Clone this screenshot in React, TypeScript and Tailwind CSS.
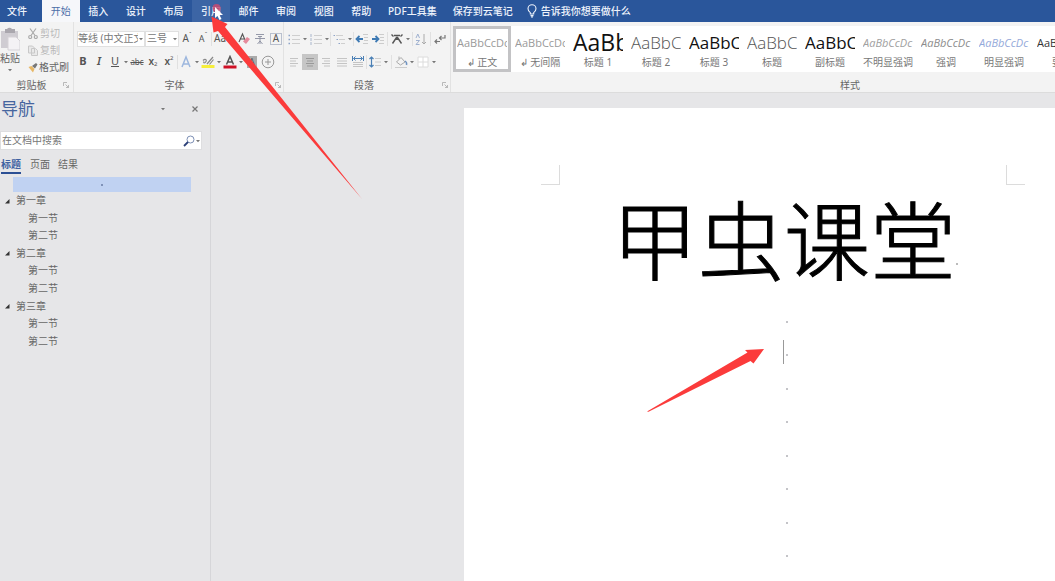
import type { ReactNode } from "react";

const tabs = ["开始", "插入", "设计", "布局", "引用", "邮件", "审阅", "视图", "帮助"];

const styles = [
  { name: "↲ 正文", sample: "AaBbCcDc", look: "text-[11px] text-[#9a9a9a]" },
  { name: "↲ 无间隔", sample: "AaBbCcDc", look: "text-[11px] text-[#9a9a9a]" },
  { name: "标题 1", sample: "AaBb", look: "text-[23px] font-medium text-[#111]" },
  { name: "标题 2", sample: "AaBbC", look: "text-[17px] font-light text-[#555]" },
  { name: "标题 3", sample: "AaBbC", look: "text-[17px] font-medium text-[#111]" },
  { name: "标题", sample: "AaBbC", look: "text-[17px] font-light text-[#555]" },
  { name: "副标题", sample: "AaBbC", look: "text-[17px] font-medium text-[#111]" },
  { name: "不明显强调", sample: "AaBbCcDc", look: "text-[11px] italic text-[#a0a0a0]" },
  { name: "强调", sample: "AaBbCcDc", look: "text-[11px] italic text-[#8c8c8c]" },
  { name: "明显强调", sample: "AaBbCcDc", look: "text-[11px] italic text-[#94a9da]" },
  { name: "要点", sample: "AaBbCcDc", look: "text-[11px] font-medium text-[#333]" },
];

const outline = [
  { title: "第一章", sections: ["第一节", "第二节"] },
  { title: "第二章", sections: ["第一节", "第二节"] },
  { title: "第三章", sections: ["第一节", "第二节"] },
];

function Tool({ label, on, children }: { label: string; on?: boolean; children: ReactNode }) {
  return (
    <button
      aria-label={label}
      className={
        "flex h-4 w-4 shrink-0 items-center justify-center text-[#555] " + (on ? "bg-[#c6c6c6]" : "")
      }
    >
      {children}
    </button>
  );
}

function Caret() {
  return (
    <svg viewBox="0 0 6 6" className="h-1.5 w-1.5 shrink-0" fill="#777">
      <path d="M1 2h4L3 4.200z" />
    </svg>
  );
}

function Rule() {
  return <span className="h-3.5 w-px shrink-0 bg-[#e0e0e0]" />;
}

function Icon({ children }: { children: ReactNode }) {
  return (
    <svg viewBox="0 0 14 14" className="h-3.5 w-3.5" fill="none" stroke="currentColor">
      {children}
    </svg>
  );
}

function Launcher() {
  return (
    <svg viewBox="0 0 6 6" className="h-1.5 w-1.5" fill="none" stroke="#aaa" strokeWidth="0.8">
      <path d="M0.5 4V0.5H4M2.5 2.5l3 3M5.5 3v2.5H3" />
    </svg>
  );
}

function GroupLabel({ text, launcher }: { text: string; launcher?: boolean }) {
  return (
    <div className="mt-auto flex h-3.5 items-center text-[10px] text-[#666]">
      <span className="flex-1 whitespace-nowrap text-center leading-3.5">{text}</span>
      {launcher && <Launcher />}
    </div>
  );
}

function TitleTabs() {
  return (
    <nav className="flex h-[22px] items-stretch overflow-hidden whitespace-nowrap bg-[#2a569b] text-[10px] font-medium text-[#eef3fb]">
      <button className="w-[42px] pr-2 text-center">文件</button>
      <div className="grid w-[338px] shrink-0 grid-cols-9">
        {tabs.map((tab) => (
          <button
            key={tab}
            className={
              tab === "开始" ? "bg-[#f6f7fa] font-normal text-[#4b6ea8]" : tab === "引用" ? "bg-[#3c65a5]" : ""
            }
          >
            {tab}
          </button>
        ))}
      </div>
      <button className="px-2">PDF工具集</button>
      <button className="px-2">保存到云笔记</button>
      <button className="flex items-center gap-1 pl-1.5">
        <svg viewBox="0 0 10 14" className="h-3.5 w-2.5" fill="none" stroke="#eef3fb" strokeWidth="1.1">
          <path d="M3.3 10V8.6C2 7.6 1 6.500 1 4.800a4 4 0 0 1 8 0c0 1.700-1 2.800-2.300 3.800V10zM3.500 11.600h3M4 13h2" />
        </svg>
        告诉我你想要做什么
      </button>
    </nav>
  );
}

function Clipboard() {
  return (
    <section className="flex w-[74px] shrink-0 flex-col border-r border-[#e2e2e2] pr-1">
      <div className="flex gap-2 whitespace-nowrap pt-[3px]">
        <button className="flex w-5 flex-col items-center pt-0.5 text-[10px] text-[#666]">
          <svg viewBox="0 0 20 24" className="h-6 w-5">
            <path d="M1 4h17v17H1z" fill="#cfccd2" />
            <path d="M5 2h2a3 3 0 0 1 5 0h3v4H5z" fill="#aaa7ae" />
            <path d="M8 10h8l4 4v9H8z" fill="#f4f2f5" stroke="#d5d2d7" />
          </svg>
          <span className="leading-3.5">粘贴</span>
          <span className="mt-0.5"><Caret /></span>
        </button>
        <div className="flex flex-col text-[10px] text-[#b9b9b9]">
          <button className="flex h-[17px] items-center gap-0.5">
            <svg viewBox="0 0 10 11" className="h-[11px] w-2.5" fill="none" stroke="#aaa" strokeWidth="1.2">
              <path d="M2 0.500l5 7M8 0.500l-5 7" />
              <circle cx="2.200" cy="9" r="1.500" />
              <circle cx="7.800" cy="9" r="1.500" />
            </svg>
            剪切
          </button>
          <button className="flex h-[17px] items-center gap-0.5">
            <svg viewBox="0 0 10 11" className="h-[11px] w-2.5" fill="#e9e9e9" stroke="#c8c8c8">
              <path d="M0.500 1h4l2 2v5h-6zM3.500 3.500h4l2 2v5h-6z" />
            </svg>
            复制
          </button>
          <button className="flex h-[17px] items-center gap-px text-[#666]">
            <svg viewBox="0 0 10 11" className="h-[11px] w-2.5 shrink-0">
              <path d="M0.500 5l3-1 3 3-1.500 3.500z" fill="#e7b765" />
              <path d="M4 4l4-3 1.500 1.500L7 6.500z" fill="#777" />
            </svg>
            格式刷
          </button>
        </div>
      </div>
      <GroupLabel text="剪贴板" launcher />
    </section>
  );
}

function FontGroup() {
  return (
    <section className="flex w-[210px] shrink-0 flex-col border-r border-[#e2e2e2] pr-0.5 pt-[5px]">
      <div className="flex h-[23px] items-center pl-[3px]">
        <div className="relative flex h-4 w-[68px] shrink-0 items-center border border-[#e0e0e0] bg-white">
          <select aria-label="字体" className="w-full appearance-none overflow-hidden bg-transparent pr-1.5 text-[10px] text-[#777]">
            <option>等线 (中文正文)</option>
          </select>
          <span className="pointer-events-none absolute right-0 top-0 flex h-full items-center bg-white"><Caret /></span>
        </div>
        <div className="relative flex h-4 w-[34px] shrink-0 items-center border border-[#e0e0e0] bg-white">
          <select aria-label="字号" className="w-full appearance-none bg-transparent pl-px text-[10px] text-[#777]">
            <option>三号</option>
          </select>
          <span className="pointer-events-none absolute right-0 top-0 flex h-full items-center"><Caret /></span>
        </div>
        <Tool label="增大字号"><span className="text-[10px]">A</span><span className="mb-2 text-[6px]">ˆ</span></Tool>
        <Tool label="减小字号"><span className="text-[9px]">A</span><span className="mb-2 text-[6px]">ˇ</span></Tool>
        <Rule />
        <Tool label="更改大小写"><span className="text-[10px]">Aa</span></Tool>
        <span className="w-2 shrink-0"><Caret /></span>
        <Tool label="清除所有格式">
          <Icon>
            <path d="M2 10L5.500 2 8 8M3.500 7h4" strokeWidth="1.100" />
            <path d="M6 9.500l4-4.500 3 2-4 5z" fill="#e58b9c" stroke="none" />
          </Icon>
        </Tool>
        <Tool label="拼音指南">
          <Icon><path d="M3 2.500h8M5 4.500h4M2 6.500h10M7 4.500V12M4.500 12l2.500-3 2.500 3" stroke="#8a8fa0" strokeWidth="0.900" /></Icon>
        </Tool>
        <Tool label="字符边框"><span className="flex h-3 w-3 items-center justify-center border border-[#b9c0ce] text-[10px]">A</span></Tool>
      </div>
      <div className="flex h-[23px] items-center pl-px">
        <Tool label="加粗"><span className="text-[11px] font-bold">B</span></Tool>
        <Tool label="倾斜"><span className="text-[11px] font-semibold italic">I</span></Tool>
        <Tool label="下划线"><span className="text-[11px] underline">U</span></Tool>
        <Caret />
        <Tool label="删除线"><span className="text-[8px] line-through">abc</span></Tool>
        <Tool label="下标"><span className="text-[10px] font-semibold">x</span><span className="mt-1.5 text-[6px]">2</span></Tool>
        <Tool label="上标"><span className="text-[10px] font-semibold">x</span><span className="mb-1.5 text-[6px]">2</span></Tool>
        <Rule />
        <Tool label="文本效果">
          <Icon><path d="M3 12L7 2l4 10M4.500 9h5" stroke="#9db7de" strokeWidth="1.500" /></Icon>
        </Tool>
        <Caret />
        <Tool label="突出显示">
          <Icon>
            <path d="M0.500 10h13v3h-13z" fill="#f6ee3a" stroke="none" />
            <path d="M2 5.500c2-2 4-1 3 1s-3 2-2 0M6 9l6-7M8.500 9.500l4-5" strokeWidth="1.200" stroke="#888" />
          </Icon>
        </Tool>
        <Caret />
        <Tool label="字体颜色">
          <Icon>
            <path d="M0.500 10.500h13V13.500h-13z" fill="#cf1126" stroke="none" />
            <path d="M3.500 9.500L7 1.500l3.500 8M5 7h4" strokeWidth="1.500" />
          </Icon>
        </Tool>
        <Caret />
        <Tool label="字符底纹"><span className="flex h-3 w-2.5 items-center justify-center bg-[#aaa] text-[9px]">A</span></Tool>
        <Tool label="带圈字符">
          <Icon><circle cx="7" cy="7" r="5.800" stroke="#999" /><path d="M4 7h6M7 4v6" stroke="#999" /></Icon>
        </Tool>
      </div>
      <GroupLabel text="字体" launcher />
    </section>
  );
}

function Lines({ d }: { d: string }) {
  return <Icon><path d={d} stroke="#c4c4c4" /></Icon>;
}

function ParagraphGroup() {
  return (
    <section className="flex w-[167px] shrink-0 flex-col border-r border-[#e2e2e2] pl-0.5 pr-0.5 pt-[5px]">
      <div className="flex h-[23px] items-center">
        <Tool label="项目符号">
          <Icon>
            <path d="M5 3.500h8M5 7.500h8M5 11.500h8" stroke="#cfcfcf" />
            <path d="M1.500 3.500h1.500M1.500 7.500h1.500M1.500 11.500h1.500" stroke="#8ea4c8" strokeWidth="1.500" />
          </Icon>
        </Tool>
        <Caret />
        <Tool label="编号">
          <Icon>
            <path d="M5 3.500h8M5 7.500h8M5 11.500h8" stroke="#cfcfcf" />
            <path d="M2 2v3M2 6v3M2 10v3" stroke="#a9b6cc" />
          </Icon>
        </Tool>
        <Caret />
        <Rule />
        <Tool label="多级列表">
          <Icon>
            <path d="M4 3.500h7M7 7.500h6M9 11.500h4" stroke="#cfcfcf" />
            <path d="M1.500 3.500h1.500M4.500 7.500h1.500M6.500 11.500h1.500" stroke="#8ea4c8" />
          </Icon>
        </Tool>
        <Caret />
        <Rule />
        <Tool label="减少缩进">
          <Icon>
            <path d="M8 2.500h5M9 5.500h4M9 8.500h4M8 11.500h5" stroke="#ccc" />
            <path d="M8 7H2M4.500 4L1.500 7l3 3" stroke="#3e7ab4" strokeWidth="1.800" />
          </Icon>
        </Tool>
        <Tool label="增加缩进">
          <Icon>
            <path d="M8 2.500h5M9 5.500h4M9 8.500h4M8 11.500h5" stroke="#ccc" />
            <path d="M1 7h6M4.500 4l3 3-3 3" stroke="#3e7ab4" strokeWidth="1.800" />
          </Icon>
        </Tool>
        <span className="flex w-1 justify-center"><Rule /></span>
        <Tool label="中文版式">
          <Icon><path d="M1.500 2.500l2 2M12.500 2.500l-2 2M2.500 11.500l4-6h1l4 6M4 3.500h6M7 6v2" strokeWidth="1.400" /></Icon>
        </Tool>
        <Caret />
        <span className="flex w-1 justify-center"><Rule /></span>
        <Tool label="排序">
          <Icon>
            <path d="M2 6l1.800-4L5.500 6M2 8.500h3.500L2 12.500h3.500" stroke="#9fb1d0" />
            <path d="M10 2v10M8 10l2 2 2-2" stroke="#aaa" />
          </Icon>
        </Tool>
        <span className="flex w-1 justify-center"><Rule /></span>
        <Tool label="显示编辑标记">
          <Icon><path d="M12 3v3H7M8.500 4L6.500 6l2 2M7 9.500H2M4 7.500l-2 2 2 2" strokeWidth="1.200" stroke="#777" /></Icon>
        </Tool>
      </div>
      <div className="flex h-[23px] items-center">
        <Tool label="左对齐"><Lines d="M3 3.500h8M3 6h6M3 8.500h8M3 11h6" /></Tool>
        <Tool label="居中" on><Icon><path d="M3 3.500h8M4 6h6M3 8.500h8M4 11h6" stroke="#999" /></Icon></Tool>
        <Tool label="右对齐"><Lines d="M3 3.500h8M5 6h6M3 8.500h8M5 11h6" /></Tool>
        <Tool label="两端对齐"><Lines d="M2 3.500h10M2 6h10M2 8.500h10M2 11h10" /></Tool>
        <Tool label="分散对齐">
          <Icon>
            <path d="M2 7.500h10M2 9.500h10M2 11.500h10" stroke="#c4c4c4" />
            <path d="M1.500 1v5M12.500 1v5M2.500 3.500h9M4.500 1.500l-2 2 2 2M9.500 1.500l2 2-2 2" stroke="#4b80b5" />
          </Icon>
        </Tool>
        <Rule />
        <Tool label="行距">
          <Icon>
            <path d="M7 3.500h6M7 7h6M7 10.500h6" stroke="#ccc" />
            <path d="M3.500 2v10M1.500 4l2-2 2 2M1.500 10l2 2 2-2" stroke="#4b80b5" strokeWidth="1.200" />
          </Icon>
        </Tool>
        <Caret />
        <span className="flex w-1 justify-center"><Rule /></span>
        <Tool label="底纹">
          <Icon>
            <path d="M2.500 7L7 2.500l4 4.500-4.500 3zM5 4V1.500" stroke="#aaa" />
            <path d="M11 6c1.500 1 2 2 1.500 4" stroke="#6f93c2" strokeWidth="1.500" />
            <path d="M1 12.500h12" stroke="#ccc" />
          </Icon>
        </Tool>
        <Caret />
        <Tool label="边框">
          <Icon><path d="M2 2h10v10H2zM7 2v10M2 7h10" stroke="#dcdcdc" fill="#fff" /></Icon>
        </Tool>
        <Caret />
      </div>
      <GroupLabel text="段落" launcher />
    </section>
  );
}

function StyleGallery() {
  return (
    <section className="flex min-w-0 flex-1 flex-col pl-0.5">
      <div className="mt-1 flex h-[46px] overflow-hidden bg-white">
        {styles.map((style, i) => (
          <button
            key={style.name}
            className={
              "flex w-[58px] shrink-0 flex-col items-center border-[3px] " +
              (i === 0 ? "border-[#c3c3c5]" : "border-transparent")
            }
          >
            <span className={"h-[27px] w-[50px] overflow-hidden whitespace-nowrap text-left font-['Open_Sans','Noto_Sans',sans-serif] leading-[27px] " + style.look}>
              {style.sample}
            </span>
            <span className="whitespace-nowrap text-[10px] leading-3 text-[#777]">{style.name}</span>
          </button>
        ))}
      </div>
      <div className="mr-48 mt-auto flex h-3.5 items-center justify-center pl-96 text-[10px] leading-3.5 text-[#666]">
        <span className="w-5 whitespace-nowrap">样式</span>
      </div>
    </section>
  );
}

function NavigationPane() {
  return (
    <aside className="w-[211px] shrink-0 border-r border-[#d6d6d9] text-[10px] text-[#666]">
      <header className="flex h-8 items-center pl-px pr-3">
        <h2 className="flex-1 text-[17px] text-[#45659f]">导航</h2>
        <button aria-label="任务窗格选项" className="mr-[26px]"><Caret /></button>
        <button aria-label="关闭">
          <svg viewBox="0 0 6 6" className="h-1.5 w-1.5" stroke="#777" strokeWidth="1.200"><path d="M0.500 0.500l5 5M5.500 0.500l-5 5" /></svg>
        </button>
      </header>
      <label className="mr-2 mt-1.5 flex h-[19px] items-center border border-[#dedee0] bg-white pl-px">
        <input aria-label="在文档中搜索" placeholder="在文档中搜索" className="min-w-0 flex-1 outline-none placeholder:text-[#777]" />
        <svg viewBox="0 0 12 12" className="h-3 w-3" fill="none">
          <circle cx="7.500" cy="4.500" r="3.500" stroke="#7d8fb5" />
          <path d="M5 7l-4 4" stroke="#2b3f78" strokeWidth="1.800" />
        </svg>
        <Caret />
      </label>
      <div className="mt-1.5 flex gap-2 pl-px">
        <button className="h-[18px] border-b-2 border-[#2b4f94] font-bold text-[#3f62a2]">标题</button>
        <button className="h-[18px] border-b-2 border-transparent pl-px">页面</button>
        <button className="h-[18px] border-b-2 border-transparent">结果</button>
      </div>
      <button aria-label="文档标题" className="ml-[13px] mt-[3px] flex h-[15px] w-[178px] items-center justify-center bg-[#c0d2f2]">
        <span className="h-0.5 w-0.5 bg-[#7f92b8]" />
      </button>
      <ul className="grid h-[158px] grid-rows-3">
        {outline.map((chapter) => (
          <li key={chapter.title} className="grid grid-rows-3 items-center">
            <button className="flex items-center gap-1.5 pl-1">
              <svg viewBox="0 0 6 6" className="h-1.5 w-1.5" fill="#333"><path d="M5.500 1v4.500H1z" /></svg>
              {chapter.title}
            </button>
            {chapter.sections.map((section) => (
              <button key={section} className="pl-7 text-left">{section}</button>
            ))}
          </li>
        ))}
      </ul>
    </aside>
  );
}

function DocumentPage() {
  return (
    <main className="flex min-w-0 flex-1 pl-[253px] pt-[15px]">
      <article className="flex-1 bg-white pl-[77px] pr-[30px] pt-[57px]">
        <div className="flex justify-between">
          <span className="h-5 w-[19px] border-b border-r border-[#dcdcdc]" />
          <span className="h-5 w-[19px] border-b border-l border-[#dcdcdc]" />
        </div>
        <h1 className="flex items-end justify-center whitespace-nowrap pl-1 text-[86px] font-light leading-[112px] text-black [-webkit-text-stroke:1px_black]">
          甲虫课堂
          <span className="mb-8 h-0.5 w-0.5 bg-[#bbb]" />
        </h1>
        <div className="mt-2 grid h-[268px] grid-rows-8 items-center justify-center pl-[7px]">
          {["a", "b", "c", "d", "e", "f", "g", "h"].map((row) => (
            <p key={row} className="relative h-0.5 w-0.5 bg-[#c4c4c8]">
              {row === "b" && <span className="absolute -left-[3px] -top-3.5 h-6 w-px bg-[#999]" />}
            </p>
          ))}
        </div>
      </article>
    </main>
  );
}

function Annotations() {
  return (
    <svg viewBox="0 0 1055 581" className="pointer-events-none absolute left-0 top-0 h-[581px] w-[1055px]">
      <circle cx="216.500" cy="8" r="4" fill="#c64a72" opacity="0.850" />
      <path d="M215 7v11l2.500-2 2 4 2-1-2-4h3.500z" fill="#fff" />
      <path d="M211.500 16.500L227.500 24l-2.500 3L362 199 218 31l-4.500 1.500z" fill="#fb3b3b" />
      <path d="M764 349l-19 1 2.500 2.500L647 411.500l1.500 0.300L750.500 361l3 2.500z" fill="#fb3b3b" />
    </svg>
  );
}

export default function App() {
  return (
    <div className="relative flex min-h-screen flex-col overflow-hidden bg-[#e6e6e8] font-['Noto_Sans','Noto_Sans_CJK_SC',sans-serif]">
      <TitleTabs />
      <div className="flex h-[70px] bg-[#f3f3f3]">
        <Clipboard />
        <FontGroup />
        <ParagraphGroup />
        <StyleGallery />
      </div>
      <div className="flex flex-1 border-t border-[#dcdcdc]">
        <NavigationPane />
        <DocumentPage />
      </div>
      <Annotations />
    </div>
  );
}
